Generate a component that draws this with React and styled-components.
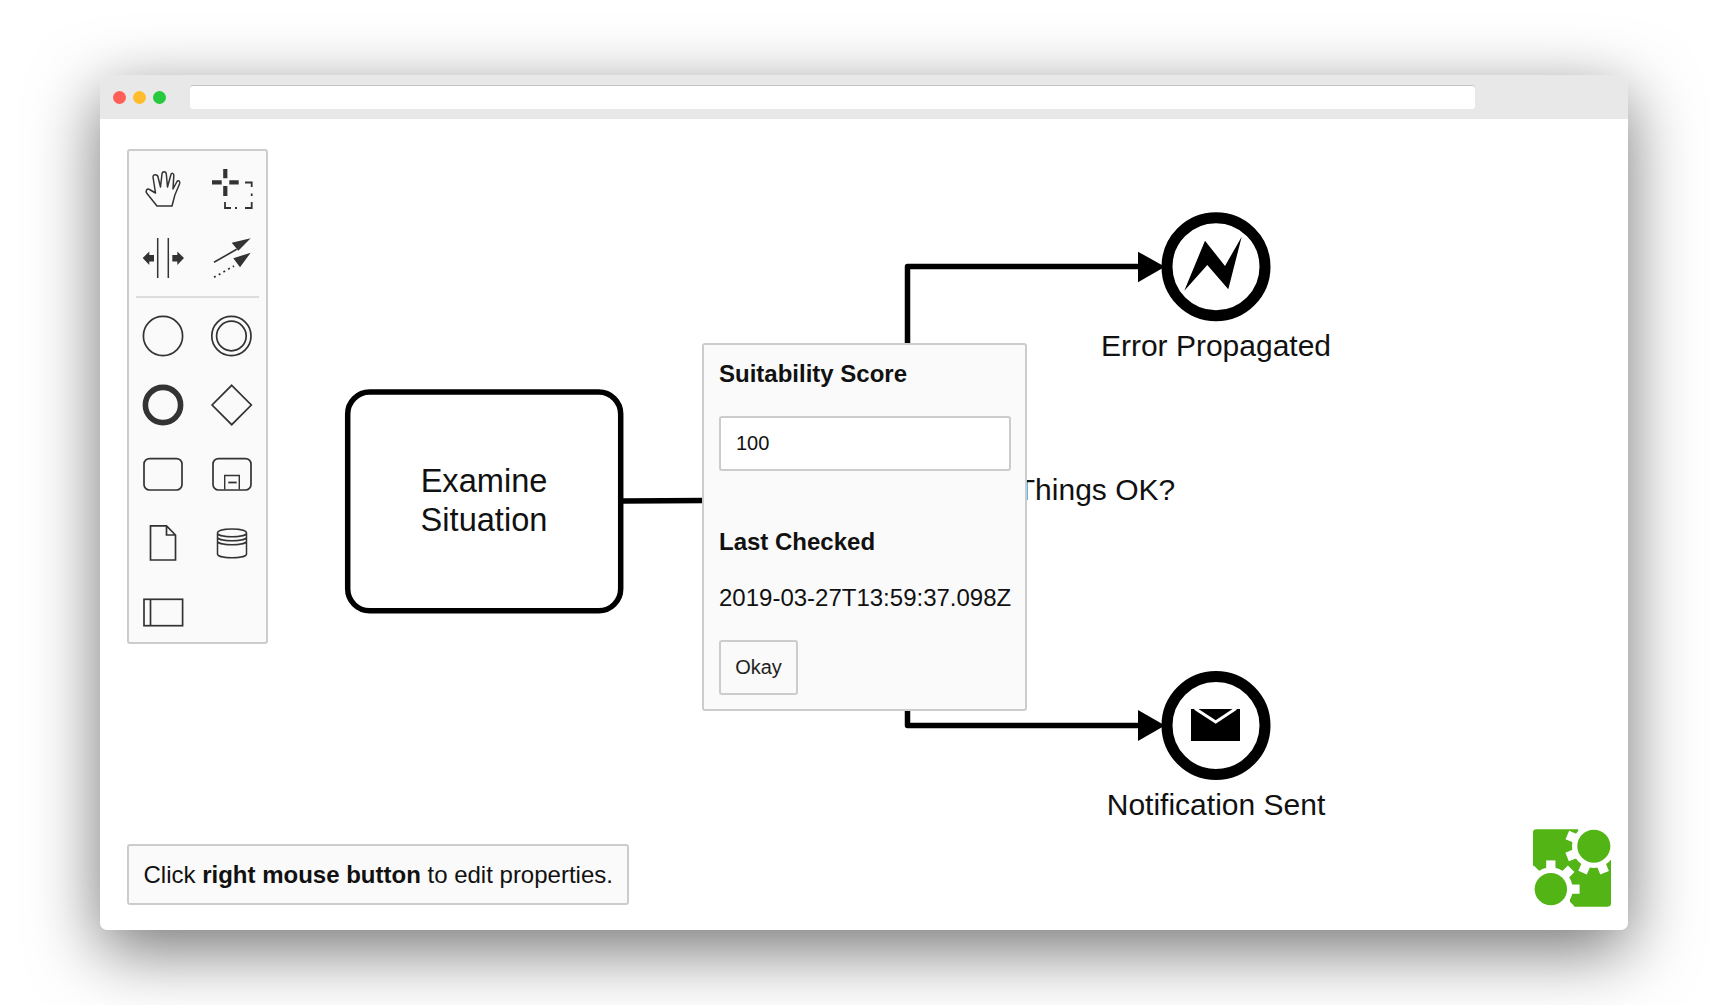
import React from "react"
import styled, { createGlobalStyle } from "styled-components"

const GlobalStyle = createGlobalStyle`
  html, body {
    margin: 0;
    padding: 0;
    background: #fff;
  }
  body {
    font-family: "Liberation Sans", Arial, sans-serif;
    color: #111;
    overflow: hidden;
  }
  * {
    box-sizing: border-box;
  }
`

const Page = styled.div`
  width: 1728px;
  height: 1005px;
  padding: 75px 100px;
`

const BrowserWindow = styled.div`
  height: 855px;
  display: flex;
  flex-direction: column;
  background: #fff;
  border-radius: 7px;
  box-shadow: 0 20px 68px rgba(0, 0, 0, 0.55);
  overflow: hidden;
`

const TitleBar = styled.div`
  height: 44px;
  flex: none;
  display: flex;
  align-items: center;
  padding: 0 0 0 13px;
  background: #e8e8e8;
`

const Dot = styled.span`
  width: 13px;
  height: 13px;
  margin-right: 7px;
  border-radius: 50%;
  background: ${(p) => p.$color};
`

const AddressBar = styled.div`
  width: 1285px;
  height: 24px;
  margin-left: 17px;
  background: #fff;
  border-radius: 3px;
  box-shadow: inset 0 1px 0 #c4c4c4;
`

const Canvas = styled.div`
  position: relative;
  flex: 1;
`

const DiagramSvg = styled.svg`
  position: absolute;
  inset: 0;
  width: 100%;
  height: 100%;
`

const NodeLabel = styled.div`
  position: absolute;
  left: ${(p) => p.$x}px;
  top: ${(p) => p.$y}px;
  width: ${(p) => p.$w}px;
  font-size: ${(p) => p.$size || 30}px;
  line-height: ${(p) => p.$lh || 36}px;
  text-align: center;
  color: #111;
`

const Palette = styled.div`
  position: absolute;
  left: 27px;
  top: 30px;
  width: 141px;
  height: 495px;
  padding: 15px 0 6px;
  background: #fafafa;
  border: 2px solid #ccc;
  border-radius: 3px;
`

const PaletteGroup = styled.div`
  display: grid;
  grid-template-columns: 68px 68px;
  grid-auto-rows: 46px;
  row-gap: 23px;
`

const PaletteSeparator = styled.div`
  width: 123px;
  height: 2px;
  margin: 15px 0 15px 7px;
  background: #ddd;
`

const PaletteEntry = styled.div`
  display: flex;
  justify-content: center;
  svg {
    display: block;
    width: 46px;
    height: 46px;
    flex: none;
    fill: none;
    stroke: #333;
    stroke-width: 1.7;
  }
`

const Popup = styled.div`
  position: absolute;
  left: 602px;
  top: 224px;
  width: 325px;
  height: 368px;
  padding: 15px;
  background: #fafafa;
  border: 2px solid #ccc;
  border-radius: 3px;
`

const FieldLabel = styled.div`
  font-size: 24px;
  line-height: 28px;
  font-weight: 700;
  margin-bottom: ${(p) => p.$gap}px;
  color: #111;
`

const ScoreInput = styled.input`
  display: block;
  width: 292px;
  height: 55px;
  padding: 0 15px;
  margin-bottom: 57px;
  font-family: inherit;
  font-size: 20px;
  color: #111;
  background: #fff;
  border: 2px solid #ccc;
  border-radius: 3px;
  outline: none;
`

const FieldValue = styled.div`
  font-size: 24px;
  line-height: 28px;
  margin-bottom: 28px;
  white-space: nowrap;
  color: #111;
`

const OkayButton = styled.button`
  display: block;
  width: 79px;
  height: 55px;
  padding: 0;
  font-family: inherit;
  font-size: 20px;
  color: #222;
  background: #fafafa;
  border: 2px solid #ccc;
  border-radius: 3px;
`

const Hint = styled.div`
  position: absolute;
  left: 27px;
  bottom: 25px;
  height: 61px;
  padding: 0 14px 0 14.5px;
  display: flex;
  align-items: center;
  white-space: pre;
  font-size: 24px;
  background: #fafafa;
  border: 2px solid #ccc;
  border-radius: 3px;
  color: #111;
  b {
    font-weight: 700;
  }
`

const LogoSvg = styled.svg`
  position: absolute;
  right: 17px;
  bottom: 23px;
  width: 78px;
  height: 78px;
`

const HandIcon = () => (
  <svg viewBox="0 0 46 46">
    <path
      strokeWidth="1.5"
      strokeLinejoin="round"
      d="M17 40 L7 27.5 C5 25 7 22 9.5 23.5 L15.5 27 L13 11 C12.8 8 17.5 8 18 11 L20.5 21 L22 8 C22.3 5 26 5 26.3 8 L27.5 21 L30.8 9 C31.5 6.5 34 7 33.8 9.5 L33 23 L37 15.5 C38.5 13.5 40.5 15.5 39.5 18 C36 25 33.5 32 32 40 Z"
    />
  </svg>
)

const LassoIcon = () => (
  <svg viewBox="0 0 46 46">
    <path strokeWidth="4.2" d="M17.3 3 V12.3 M17.3 20 V30 M4 16.3 H13.7 M21.3 16.3 H30.7" />
    <path
      strokeWidth="1.8"
      d="M37 16.5 H43.7 V21 M43.7 27.5 V30 M43.7 36 V42 H37 M29 42 H27 M23 42 H17 V36"
    />
  </svg>
)

const SpaceIcon = () => (
  <svg viewBox="0 0 46 46">
    <path strokeWidth="1.5" d="M17.7 3 V43 M28.3 3 V43" />
    <path
      stroke="none"
      fill="#333"
      d="M2.7 23 L9.3 16.5 V20 H14 V26.5 H9.3 V30 Z M44 23 L37.3 16.5 V20 H32.3 V26.5 H37.3 V30 Z"
    />
  </svg>
)

const ConnectIcon = () => (
  <svg viewBox="0 0 46 46">
    <path strokeWidth="1.6" d="M6 27.3 L28.7 14.3" />
    <path strokeWidth="1.7" strokeDasharray="2 3.4" d="M6 42.3 L26 31" />
    <path stroke="none" fill="#333" d="M42.7 3.3 L23.7 7.7 L30.3 15.7 Z M42.7 17.7 L25.3 23.3 L32 32.3 Z" />
  </svg>
)

const StartIcon = () => (
  <svg viewBox="0 0 46 46">
    <circle cx="23" cy="23" r="19.6" />
  </svg>
)

const IntermediateIcon = () => (
  <svg viewBox="0 0 46 46">
    <circle cx="23.4" cy="23" r="19.6" />
    <circle cx="23.4" cy="23" r="14.8" />
  </svg>
)

const EndIcon = () => (
  <svg viewBox="0 0 46 46">
    <circle cx="23" cy="23" r="17.6" strokeWidth="5.6" />
  </svg>
)

const GatewayIcon = () => (
  <svg viewBox="0 0 46 46">
    <path d="M23.7 3.3 L43.3 23 L23.7 42.7 L4.1 23 Z" />
  </svg>
)

const TaskIcon = () => (
  <svg viewBox="0 0 46 46">
    <rect x="4" y="7.6" width="38" height="31.4" rx="5.5" />
  </svg>
)

const SubprocessIcon = () => (
  <svg viewBox="0 0 46 46">
    <rect x="5" y="7.6" width="38" height="31.4" rx="5.5" />
    <path strokeWidth="1.4" d="M16.7 38.5 V24.5 H31.3 V38.5" />
    <path strokeWidth="1.8" d="M20.3 31.5 H28.7" />
  </svg>
)

const DataObjectIcon = () => (
  <svg viewBox="0 0 46 46">
    <path d="M10.5 5.8 H26.5 L35.5 15 V40 H10.5 Z M26.5 5.8 V15 H35.5" strokeLinejoin="miter" />
  </svg>
)

const DataStoreIcon = () => (
  <svg viewBox="0 0 46 46">
    <path
      strokeWidth="1.5"
      d="M9.5 13 C9.5 7.5 38.5 7.5 38.5 13 V34 C38.5 39 9.5 39 9.5 34 Z M9.5 13 C9.5 18 38.5 18 38.5 13 M9.5 17 C9.5 22 38.5 22 38.5 17 M9.5 21 C9.5 26 38.5 26 38.5 21"
    />
  </svg>
)

const ParticipantIcon = () => (
  <svg viewBox="0 0 46 46">
    <rect x="4" y="10.3" width="38.6" height="26.4" />
    <path d="M10.5 10.3 V36.7" />
  </svg>
)

const ErrorEvent = () => (
  <g>
    <circle cx="1216" cy="266.7" r="49" fill="#fff" stroke="#000" strokeWidth="11" />
    <polygon points="1184.3,290.7 1205,240.7 1225,266 1241.7,236.7 1228.3,289.3 1207.3,265" fill="#000" />
  </g>
)

const MessageEvent = () => (
  <g>
    <circle cx="1216" cy="725.5" r="49" fill="#fff" stroke="#000" strokeWidth="11" />
    <rect x="1191" y="709" width="49" height="32" fill="#000" />
    <path d="M1195 708.5 L1215.7 722 L1236 708.5" fill="none" stroke="#fff" strokeWidth="3" />
  </g>
)

// drawn in the page's own pixel coordinates
const Diagram = () => (
  <DiagramSvg viewBox="100 119 1528 811">
    <rect x="347.7" y="392" width="273" height="218.8" rx="22" fill="#fff" stroke="#000" strokeWidth="5.5" />
    <path d="M623 501 L705 500.4" fill="none" stroke="#000" strokeWidth="5.5" />
    <path d="M907.5 345 V266.5 H1140" fill="none" stroke="#000" strokeWidth="5.5" strokeLinejoin="round" />
    <path d="M907.5 705 V725.5 H1140" fill="none" stroke="#000" strokeWidth="5.5" strokeLinejoin="round" />
    <polygon points="1138,251.7 1165,266.7 1138,282.3" fill="#000" />
    <polygon points="1138,710 1165,725.5 1138,741" fill="#000" />
    <ErrorEvent />
    <MessageEvent />
  </DiagramSvg>
)

const toothAngles = [0, 45, 90, 135, 180, 225, 270, 315]

const Gear = ({ cx, cy, start }) => (
  <g fill="#fff">
    <circle cx={cx} cy={cy} r="66" />
    {toothAngles.map((a) => (
      <rect
        key={a}
        x={cx + 60}
        y={cy - 14}
        width="27"
        height="28"
        transform={`rotate(${a + start} ${cx} ${cy})`}
      />
    ))}
  </g>
)

const Logo = () => (
  <LogoSvg viewBox="68 57 236 234">
    <rect x="68" y="57" width="236" height="234" rx="10" fill="#52b415" />
    <path d="M205 50 H310 V150 H252 V108 H205 Z" fill="#fff" />
    <path d="M60 170 L122 238 V300 H180 V238 H122 L60 170 Z" fill="#fff" />
    <Gear cx={252} cy={108} start={23} />
    <Gear cx={122} cy={238} start={0} />
    <circle cx="252" cy="108" r="50" fill="#52b415" />
    <circle cx="122" cy="238" r="49" fill="#52b415" />
  </LogoSvg>
)

const App = () => {
  return (
    <Page>
      <GlobalStyle />
      <BrowserWindow>
        <TitleBar>
          <Dot $color="#ff5f56" />
          <Dot $color="#ffbd2e" />
          <Dot $color="#27c93f" />
          <AddressBar />
        </TitleBar>
        <Canvas>
          <Diagram />
          <NodeLabel $x={284} $y={342} $w={200} $size={32.6} $lh={39}>
            Examine
            <br />
            Situation
          </NodeLabel>
          <NodeLabel $x={916} $y={353} $w={160}>
            Things OK?
          </NodeLabel>
          <NodeLabel $x={966} $y={209} $w={300}>
            Error Propagated
          </NodeLabel>
          <NodeLabel $x={966} $y={668} $w={300}>
            Notification Sent
          </NodeLabel>

          <Palette>
            <PaletteGroup>
              <PaletteEntry><HandIcon /></PaletteEntry>
              <PaletteEntry><LassoIcon /></PaletteEntry>
              <PaletteEntry><SpaceIcon /></PaletteEntry>
              <PaletteEntry><ConnectIcon /></PaletteEntry>
            </PaletteGroup>
            <PaletteSeparator />
            <PaletteGroup>
              <PaletteEntry><StartIcon /></PaletteEntry>
              <PaletteEntry><IntermediateIcon /></PaletteEntry>
              <PaletteEntry><EndIcon /></PaletteEntry>
              <PaletteEntry><GatewayIcon /></PaletteEntry>
              <PaletteEntry><TaskIcon /></PaletteEntry>
              <PaletteEntry><SubprocessIcon /></PaletteEntry>
              <PaletteEntry><DataObjectIcon /></PaletteEntry>
              <PaletteEntry><DataStoreIcon /></PaletteEntry>
              <PaletteEntry><ParticipantIcon /></PaletteEntry>
            </PaletteGroup>
          </Palette>

          <Popup>
            <FieldLabel $gap={28}>Suitability Score</FieldLabel>
            <ScoreInput defaultValue="100" />
            <FieldLabel $gap={28}>Last Checked</FieldLabel>
            <FieldValue>2019-03-27T13:59:37.098Z</FieldValue>
            <OkayButton>Okay</OkayButton>
          </Popup>

          <Hint>
            Click <b>right mouse button</b> to edit properties.
          </Hint>

          <Logo />
        </Canvas>
      </BrowserWindow>
    </Page>
  )
}

export default App
